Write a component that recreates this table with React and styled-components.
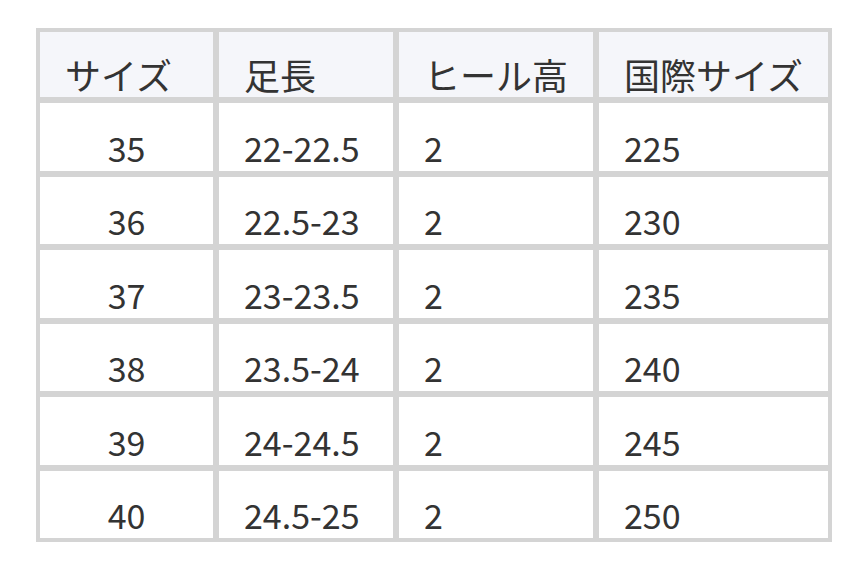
import React from "react";
import styled, { createGlobalStyle } from "styled-components";

const Global = createGlobalStyle`
  html, body { margin: 0; padding: 0; background: #ffffff; }
  body { font-family: "Noto Sans CJK JP", "Noto Sans", sans-serif; color: #333333; }
`;

const Page = styled.div`
  padding: 28px 35px 0 36px;
`;

const Table = styled.table`
  width: 796px;
  table-layout: fixed;
  border-collapse: separate;
  border-spacing: 2px;
  background: #d4d4d4;
`;

const HeadCell = styled.th`
  border: 2px solid #d4d4d4;
  border-radius: 2px;
  background: #f5f6fa;
  height: 60px;
  padding: 0 0 5px ${(p) => p.$pad}px;
  text-align: left;
  vertical-align: bottom;
  font-weight: 400;
  font-size: 36px;
  line-height: 1;
  box-sizing: content-box;
`;

const Cell = styled.td`
  border: 2px solid #d4d4d4;
  border-radius: 2px;
  background: #ffffff;
  height: 61.5px;
  padding: 0 0 6px ${(p) => (p.$center ? 0 : p.$pad)}px;
  text-align: ${(p) => (p.$center ? "center" : "left")};
  vertical-align: bottom;
  font-size: 34px;
  line-height: 1;
  box-sizing: content-box;
`;

const cols = [
  { label: "サイズ", w: 177, pad: 25 },
  { label: "足長", w: 178, pad: 25 },
  { label: "ヒール高", w: 198, pad: 25 },
  { label: "国際サイズ", w: 233, pad: 25 },
];

const rows = [
  ["35", "22-22.5", "2", "225"],
  ["36", "22.5-23", "2", "230"],
  ["37", "23-23.5", "2", "235"],
  ["38", "23.5-24", "2", "240"],
  ["39", "24-24.5", "2", "245"],
  ["40", "24.5-25", "2", "250"],
];

export default function App() {
  return (
    <>
      <Global />
      <Page>
        <Table>
          <colgroup>
            {cols.map((c) => (
              <col key={c.label} style={{ width: c.w }} />
            ))}
          </colgroup>
          <thead>
            <tr>
              {cols.map((c) => (
                <HeadCell key={c.label} $pad={c.pad}>
                  {c.label}
                </HeadCell>
              ))}
            </tr>
          </thead>
          <tbody>
            {rows.map((r) => (
              <tr key={r[0]}>
                {r.map((v, i) => (
                  <Cell key={i} $center={i === 0} $pad={cols[i].pad}>
                    {v}
                  </Cell>
                ))}
              </tr>
            ))}
          </tbody>
        </Table>
      </Page>
    </>
  );
}
